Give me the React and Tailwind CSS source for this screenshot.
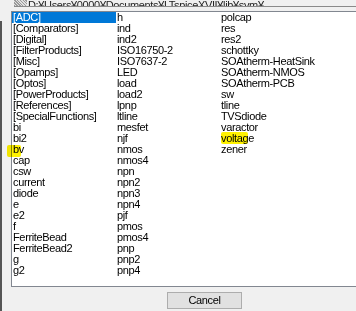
import React from "react";

const col1 = ["[ADC]","[Comparators]","[Digital]","[FilterProducts]","[Misc]","[Opamps]","[Optos]","[PowerProducts]","[References]","[SpecialFunctions]","bi","bi2","bv","cap","csw","current","diode","e","e2","f","FerriteBead","FerriteBead2","g","g2"];
const col2 = ["h","ind","ind2","ISO16750-2","ISO7637-2","LED","load","load2","lpnp","ltline","mesfet","njf","nmos","nmos4","npn","npn2","npn3","npn4","pjf","pmos","pmos4","pnp","pnp2","pnp4"];
const col3 = ["polcap","res","res2","schottky","SOAtherm-HeatSink","SOAtherm-NMOS","SOAtherm-PCB","sw","tline","TVSdiode","varactor","voltage","zener"];

function Column({ items, selected }) {
  return (
    <div className="flex flex-col w-[104px] shrink-0">
      {items.map((t, i) => (
        <div
          key={t}
          className={
            "h-[11px] leading-[11px] pl-[1px] whitespace-nowrap " +
            (selected && i === 0 ? "bg-[#0078d7] text-white" : "text-black")
          }
        >
          {t}
        </div>
      ))}
    </div>
  );
}

export default function App() {
  return (
    <div
      className="relative w-[356px] h-[311px] bg-[#f0f0f0] flex flex-col overflow-hidden text-[11px] tracking-[-0.35px]"
      style={{ fontFamily: '"Liberation Sans", "Noto Sans CJK JP", sans-serif' }}
    >
      {/* cropped path field */}
      <div className="h-[11px] shrink-0 flex">
        <div className="ml-[14px] flex-1 h-[7px] border-b border-[#8a8a8a] flex items-end overflow-hidden">
          <div className="w-[13px] h-[6px] bg-[repeating-linear-gradient(45deg,#9a9a9a_0_1px,#e0e0e0_1px_2px)] shrink-0" />
          <div className="ml-[1px] leading-[12px] h-[12px] -mb-[5px] whitespace-nowrap text-[#222]">
            D:¥Users¥0000¥Documents¥LTspiceXVII¥lib¥sym¥
          </div>
        </div>
      </div>

      {/* list area */}
      <div className="flex h-[276px] shrink-0">
        <div className="w-[2px] bg-[#555555] mt-[10px]" />
        <div className="w-[9px]" />
        <div className="flex-1 bg-white border-l border-t border-b border-[#828790] flex">
          <Column items={col1} selected />
          <Column items={col2} />
          <Column items={col3} />
        </div>
      </div>

      {/* bottom */}
      <div className="flex flex-1">
        <div className="w-[2px] bg-[#555555]" />
        <div className="flex-1 flex pt-[5px] pl-[165px]">
          <button className="w-[75px] h-[17px] bg-[#e1e1e1] border border-[#adadad] text-[11px] leading-[15px] text-black">
            Cancel
          </button>
        </div>
      </div>

      {/* yellow marker highlights */}
      <div className="absolute left-[7px] top-[145px] w-[14px] h-[12px] bg-[#fff200] mix-blend-multiply rounded-[2px]" />
      <div className="absolute left-[221px] top-[132px] w-[27px] h-[12px] bg-[#fff200] mix-blend-multiply rounded-[2px]" />
    </div>
  );
}
